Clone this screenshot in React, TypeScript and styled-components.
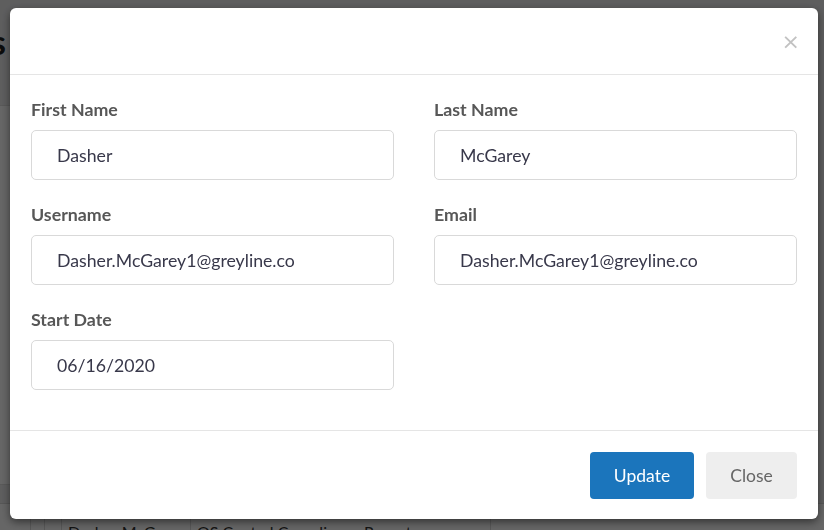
import React from 'react'
import styled, { createGlobalStyle } from 'styled-components'

const GlobalStyle = createGlobalStyle`
    html, body {
        margin: 0;
        padding: 0;
        background: #ebebec;
        font-family: Lato, "Open Sans", sans-serif;
    }
    * { box-sizing: border-box; }
`

type Field = { label: string; value: string }

const rows: Field[][] = [
    [{ label: 'First Name', value: 'Dasher' }, { label: 'Last Name', value: 'McGarey' }],
    [{ label: 'Username', value: 'Dasher.McGarey1@greyline.co' }, { label: 'Email', value: 'Dasher.McGarey1@greyline.co' }],
    [{ label: 'Start Date', value: '06/16/2020' }],
]

const App: React.FC = () => {
    return (
        <>
            <GlobalStyle />
            <Page>
                <PageTitle>Results</PageTitle>
                <FilterCard />
                <TableRow>
                    <Cell $w={31} />
                    <Cell $w={14} />
                    <Cell $w={17} />
                    <Cell $w={129}>Dasher McGarey</Cell>
                    <Cell $w={300}>OS Central Compliance Report</Cell>
                </TableRow>
            </Page>
            <Backdrop>
                <Modal>
                    <ModalHeader>
                        <CloseX>×</CloseX>
                    </ModalHeader>
                    <ModalBody>
                        {rows.map((row, i) => (
                            <FormRow key={i}>
                                {row.map(f => (
                                    <FormGroup key={f.label}>
                                        <Label>{f.label}</Label>
                                        <Input readOnly value={f.value} />
                                    </FormGroup>
                                ))}
                            </FormRow>
                        ))}
                    </ModalBody>
                    <ModalFooter>
                        <Button $primary>Update</Button>
                        <Button>Close</Button>
                    </ModalFooter>
                </Modal>
            </Backdrop>
        </>
    )
}

const Page = styled.div`
    width: 824px;
    height: 530px;
    overflow: hidden;
    display: flex;
    flex-direction: column;
    padding: 22px 0 0 0;
    & > * { flex: none; }
`
const PageTitle = styled.h1`
    margin: 0 0 0 -103px;
    font-size: 34px;
    font-weight: 700;
    color: #1f1f1f;
    height: 60px;
    line-height: 40px;
`
const FilterCard = styled.div`
    margin: 23px 0 0 -20px;
    width: 400px;
    height: 380px;
    background: #fff;
    border-radius: 6px;
    border: 1px solid #dedede;
`
const TableRow = styled.div`
    display: flex;
    margin-top: 18px;
    height: 60px;
    font-size: 16px;
    color: #333;
    background: #fff;
    border-top: 1px solid #d8d8d8;
`
const Cell = styled.div<{ $w: number }>`
    width: ${p => p.$w}px;
    flex: none;
    border-right: 1px solid #dcdcdc;
    padding: 18px 6px 0;
    line-height: 19px;
    white-space: nowrap;
`
const Backdrop = styled.div`
    position: fixed;
    inset: 0;
    background: rgba(0, 0, 0, 0.6);
    padding: 8px 0 0 10px;
`
const Modal = styled.div`
    width: 808px;
    height: 511px;
    background: #fff;
    border-radius: 6px;
    box-shadow: 0 3px 9px rgba(0, 0, 0, 0.5);
    display: flex;
    flex-direction: column;
`
const ModalHeader = styled.div`
    height: 67px;
    border-bottom: 1px solid #e5e5e5;
    display: flex;
    justify-content: flex-end;
    align-items: center;
    padding: 0 18px;
`
const CloseX = styled.span`
    font-family: "DejaVu Sans", sans-serif;
    font-size: 22px;
    color: #c2c2c2;
    line-height: 1;
    margin-top: 1px;
`
const ModalBody = styled.div`
    flex: 1;
    padding: 24px 21px 0 21px;
    border-bottom: 1px solid #e5e5e5;
`
const FormRow = styled.div`
    display: grid;
    grid-template-columns: 363px 363px;
    column-gap: 40px;
    margin-bottom: 24px;
`
const FormGroup = styled.div`
    display: flex;
    flex-direction: column;
`
const Label = styled.label`
    font-size: 17.8px;
    font-weight: 700;
    color: #575757;
    line-height: 20px;
    margin-bottom: 11px;
`
const Input = styled.input`
    height: 50px;
    border: 1px solid #d9d9d9;
    border-radius: 5px;
    padding: 0 25px;
    font-family: Lato, "Open Sans", sans-serif;
    font-size: 17.7px;
    color: #38384a;
    outline: none;
`
const ModalFooter = styled.div`
    height: 88px;
    display: flex;
    justify-content: flex-end;
    align-items: flex-start;
    gap: 12px;
    padding: 21px 21px 0 0;
`
const Button = styled.button<{ $primary?: boolean }>`
    height: 47px;
    width: ${p => (p.$primary ? 104 : 91)}px;
    border: none;
    border-radius: 4px;
    font-family: Lato, "Open Sans", sans-serif;
    font-size: 17.5px;
    background: ${p => (p.$primary ? '#1b75bc' : '#eeeeee')};
    color: ${p => (p.$primary ? '#fff' : '#666')};
`

export default App
